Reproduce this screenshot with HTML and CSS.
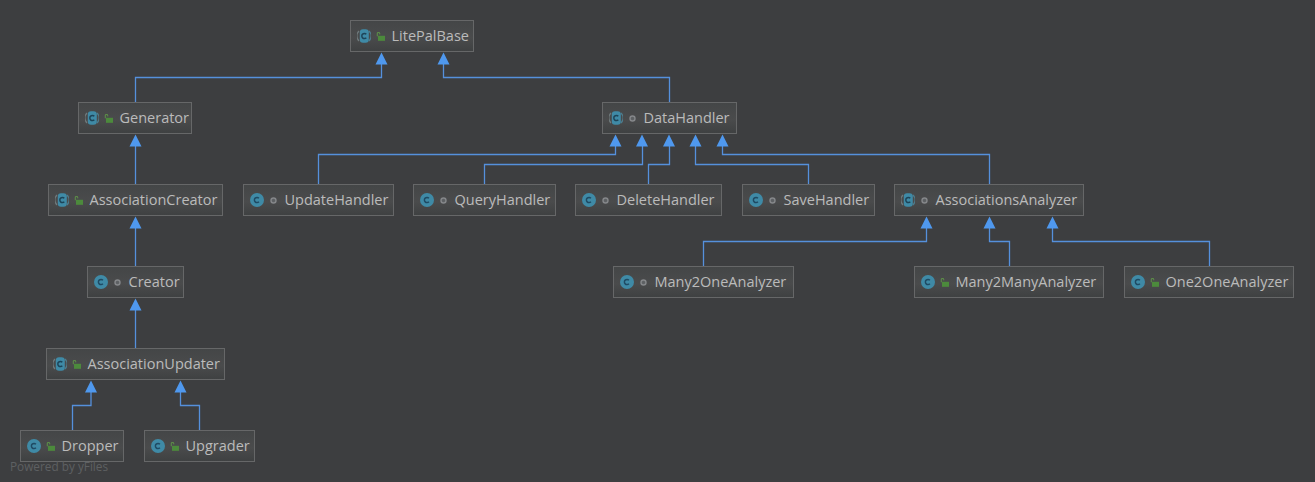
FILE: index.html
```html
<!DOCTYPE html>
<html lang="en">
<head>
<meta charset="utf-8">
<title>LitePal class diagram</title>
<link rel="stylesheet" href="styles.css">
</head>
<body>
<svg class="defs" width="0" height="0" aria-hidden="true">
  <defs>
    <symbol id="cls" viewBox="0 0 14 14">
      <circle cx="7" cy="7" r="7" fill="#3f8aa6"/>
      <path d="M8.9 5.2A2.6 2.6 0 1 0 8.9 8.8" fill="none" stroke="#1f4a63" stroke-width="1.5"/>
    </symbol>
    <symbol id="abs" viewBox="0 0 14 14">
      <path d="M2 2A7 7 0 0 0 2 12" fill="none" stroke="#6f7a7c" stroke-width="1.2"/>
      <path d="M12 2A7 7 0 0 1 12 12" fill="none" stroke="#4f7c8c" stroke-width="1.2"/>
      <rect x="2.8" y="0.2" width="9" height="13.6" rx="3.2" fill="#3f8aa6"/>
      <path d="M9.3 5.2A2.6 2.6 0 1 0 9.3 8.8" fill="none" stroke="#1d4458" stroke-width="1.5"/>
    </symbol>
    <symbol id="pub" viewBox="0 0 9 9">
      <path d="M1.3 4.2V1.8A1.2 1.2 0 0 1 3.7 1.5L3.9 2.4" fill="none" stroke="#5c8c48" stroke-width="1.1"/>
      <rect x="2" y="3.8" width="7" height="5" fill="#4c8a3c"/>
    </symbol>
    <symbol id="pkg" viewBox="0 0 9 9">
      <circle cx="4.5" cy="4.5" r="2.5" fill="#5d6063" stroke="#85878a" stroke-width="1.4"/>
    </symbol>
  </defs>
</svg>
<main class="canvas">
  <svg class="edges" width="1315" height="482" aria-hidden="true">
    <g class="lines">
      <path d="M135.5 102V77.5H381.5V60"/>
      <path d="M669.5 102V77.5H443.5V60"/>
      <path d="M135.5 184V142"/>
      <path d="M318.5 184V154.5H615.5V142"/>
      <path d="M484.5 184V164.5H642.5V142"/>
      <path d="M648.5 184V164.5H669.5V142"/>
      <path d="M808.5 184V164.5H695.5V142"/>
      <path d="M989.5 184V154.5H722.5V142"/>
      <path d="M135.5 266V224"/>
      <path d="M135.5 348V306"/>
      <path d="M703.5 266V241.5H926.5V224"/>
      <path d="M1009.5 266V241.5H989.5V224"/>
      <path d="M1209.5 266V241.5H1052.5V224"/>
      <path d="M72.5 430V405.5H91V388"/>
      <path d="M199.5 430V405.5H180.5V388"/>
    </g>
    <g class="heads">
      <path d="M381.5 52.5l6 12h-12z"/>
      <path d="M443.5 52.5l6 12h-12z"/>
      <path d="M135.5 134.5l6 12h-12z"/>
      <path d="M615.5 134.5l6 12h-12z"/>
      <path d="M642 134.5l6 12h-12z"/>
      <path d="M669 134.5l6 12h-12z"/>
      <path d="M695.5 134.5l6 12h-12z"/>
      <path d="M722.5 134.5l6 12h-12z"/>
      <path d="M135.5 216.5l6 12h-12z"/>
      <path d="M135.5 298.5l6 12h-12z"/>
      <path d="M926.5 216.5l6 12h-12z"/>
      <path d="M989.5 216.5l6 12h-12z"/>
      <path d="M1052.5 216.5l6 12h-12z"/>
      <path d="M91 380.5l6 12h-12z"/>
      <path d="M180.5 380.5l6 12h-12z"/>
    </g>
  </svg>

  <div class="node n-litepalbase"><svg class="ico"><use href="#abs"/></svg><svg class="mod"><use href="#pub"/></svg><span class="name">LitePalBase</span></div>
  <div class="node n-generator"><svg class="ico"><use href="#abs"/></svg><svg class="mod"><use href="#pub"/></svg><span class="name">Generator</span></div>
  <div class="node n-datahandler"><svg class="ico"><use href="#abs"/></svg><svg class="mod"><use href="#pkg"/></svg><span class="name">DataHandler</span></div>
  <div class="node n-asscreator"><svg class="ico"><use href="#abs"/></svg><svg class="mod"><use href="#pub"/></svg><span class="name">AssociationCreator</span></div>
  <div class="node n-update"><svg class="ico"><use href="#cls"/></svg><svg class="mod"><use href="#pkg"/></svg><span class="name">UpdateHandler</span></div>
  <div class="node n-query"><svg class="ico"><use href="#cls"/></svg><svg class="mod"><use href="#pkg"/></svg><span class="name">QueryHandler</span></div>
  <div class="node n-delete"><svg class="ico"><use href="#cls"/></svg><svg class="mod"><use href="#pkg"/></svg><span class="name">DeleteHandler</span></div>
  <div class="node n-save"><svg class="ico"><use href="#cls"/></svg><svg class="mod"><use href="#pkg"/></svg><span class="name">SaveHandler</span></div>
  <div class="node n-analyzer"><svg class="ico"><use href="#abs"/></svg><svg class="mod"><use href="#pkg"/></svg><span class="name">AssociationsAnalyzer</span></div>
  <div class="node n-creator"><svg class="ico"><use href="#cls"/></svg><svg class="mod"><use href="#pkg"/></svg><span class="name">Creator</span></div>
  <div class="node n-m2o"><svg class="ico"><use href="#cls"/></svg><svg class="mod"><use href="#pkg"/></svg><span class="name">Many2OneAnalyzer</span></div>
  <div class="node n-m2m"><svg class="ico"><use href="#cls"/></svg><svg class="mod"><use href="#pub"/></svg><span class="name">Many2ManyAnalyzer</span></div>
  <div class="node n-o2o"><svg class="ico"><use href="#cls"/></svg><svg class="mod"><use href="#pub"/></svg><span class="name">One2OneAnalyzer</span></div>
  <div class="node n-assupdater"><svg class="ico"><use href="#abs"/></svg><svg class="mod"><use href="#pub"/></svg><span class="name">AssociationUpdater</span></div>
  <div class="node n-dropper"><svg class="ico"><use href="#cls"/></svg><svg class="mod"><use href="#pub"/></svg><span class="name">Dropper</span></div>
  <div class="node n-upgrader"><svg class="ico"><use href="#cls"/></svg><svg class="mod"><use href="#pub"/></svg><span class="name">Upgrader</span></div>

  <div class="credit">Powered by yFiles</div>
</main>
</body>
</html>
```
FILE: styles.css
```css
html, body {
  margin: 0;
  padding: 0;
  background: #3d3e40;
}

.defs {
  position: absolute;
}

.canvas {
  position: relative;
  width: 1315px;
  height: 482px;
  overflow: hidden;
  background: #3d3e40;
  font-family: "Open Sans", "Noto Sans", sans-serif;
}

.edges {
  position: absolute;
  left: 0;
  top: 0;
}

.lines path {
  fill: none;
  stroke: #5590dc;
  stroke-width: 1.3;
}

.heads path {
  fill: #4f98ee;
}

.node {
  position: absolute;
  box-sizing: border-box;
  height: 32px;
  display: flex;
  align-items: center;
  padding-left: 6px;
  border: 1px solid #666768;
  background: linear-gradient(#444647, #4a4b4c 55%, #3f4142);
  color: #bbbbbb;
  font-size: 14.5px;
  white-space: nowrap;
}

.ico {
  width: 14px;
  height: 14px;
  flex: none;
}

.mod {
  width: 9px;
  height: 9px;
  flex: none;
  margin-left: 5px;
}

.name {
  margin-left: 6.5px;
  margin-top: -2px;
}

.n-litepalbase { left: 350px; top: 20px; width: 124px; }
.n-generator { left: 78px; top: 102px; width: 114px; }
.n-datahandler { left: 602px; top: 102px; width: 135px; }
.n-asscreator { left: 48px; top: 184px; width: 175px; }
.n-update { left: 243px; top: 184px; width: 151px; }
.n-query { left: 413px; top: 184px; width: 143px; }
.n-delete { left: 575px; top: 184px; width: 147px; }
.n-save { left: 742px; top: 184px; width: 133px; }
.n-analyzer { left: 894px; top: 184px; width: 190px; }
.n-creator { left: 87px; top: 266px; width: 97px; }
.n-m2o { left: 613px; top: 266px; width: 181px; }
.n-m2m { left: 914px; top: 266px; width: 190px; }
.n-o2o { left: 1124px; top: 266px; width: 170px; }
.n-assupdater { left: 46px; top: 348px; width: 179px; }
.n-dropper { left: 20px; top: 430px; width: 104px; }
.n-upgrader { left: 144px; top: 430px; width: 111px; }

.credit {
  position: absolute;
  left: 10px;
  top: 458px;
  color: #5e6062;
  font-size: 11.8px;
  line-height: 16px;
}
```
